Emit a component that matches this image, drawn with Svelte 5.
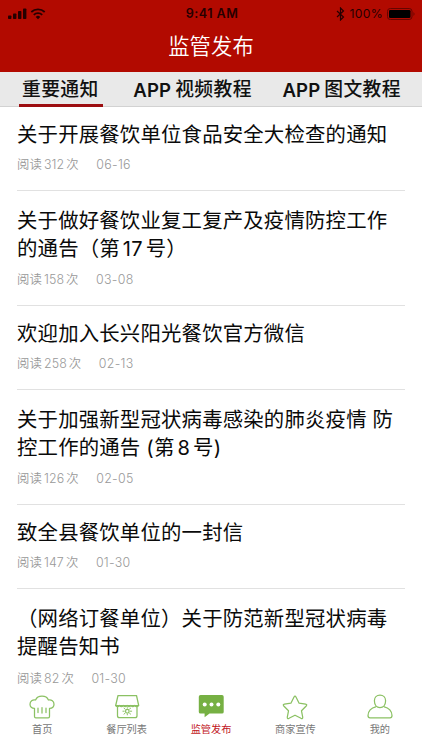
<script>
  const tabs = [
    { latin: '', text: '重要通知', active: true },
    { latin: 'APP', text: '视频教程' },
    { latin: 'APP', text: '图文教程' }
  ];
  const notices = [
    { lines: [['关于开展餐饮单位食品安全大检查的通知']], reads: '312', date: '06-16' },
    { lines: [['关于做好餐饮业复工复产及疫情防控工作'], ['的通告（第', '17', '号）']], reads: '158', date: '03-08' },
    { lines: [['欢迎加入长兴阳光餐饮官方微信']], reads: '258', date: '02-13' },
    { lines: [['关于加强新型冠状病毒感染的肺炎疫情 防'], ['控工作的通告 (第', '8', '号)']], reads: '126', date: '02-05' },
    { lines: [['致全县餐饮单位的一封信']], reads: '147', date: '01-30' },
    { lines: [['（网络订餐单位）关于防范新型冠状病毒'], ['提醒告知书']], reads: '82', date: '01-30' }
  ];
  const nav = [
    { icon: 'chef', text: '首页' },
    { icon: 'shop', text: '餐厅列表' },
    { icon: 'chat', text: '监管发布', active: true },
    { icon: 'star', text: '商家宣传' },
    { icon: 'user', text: '我的' }
  ];
</script>

<div class="app">
  <header>
    <div class="status">
      <div class="side">
        <svg width="40" height="14" viewBox="0 0 40 14">
          <g fill="#260000">
            <rect x="0" y="8.5" width="3.4" height="3.5" rx=".8" />
            <rect x="5" y="6.5" width="3.4" height="5.5" rx=".8" />
            <rect x="10" y="4" width="3.4" height="8" rx=".8" />
            <rect x="15" y="1.5" width="3.4" height="10.5" rx=".8" />
          </g>
          <g fill="none" stroke="#260000" stroke-width="1.8">
            <path d="M23.3 5a9.6 9.6 0 0 1 13.4 0" />
            <path d="M25.8 7.8a6 6 0 0 1 8.4 0" />
          </g>
          <path d="M27.7 9.9a3.4 3.4 0 0 1 4.6 0L30 12.2z" fill="#260000" />
        </svg>
      </div>
      <strong>9:41 AM</strong>
      <div class="side right">
        <svg width="9" height="14" viewBox="0 0 9 14" fill="none" stroke="#260000" stroke-width="1.2">
          <path d="M1 4l6.500 6L4.500 13V1l3 3L1 10" />
        </svg>
        <span>100%</span>
        <svg width="29" height="12" viewBox="0 0 29 12">
          <rect x=".5" y=".5" width="24.500" height="11" rx="2.800" fill="none" stroke="#650500" />
          <rect x="2" y="2" width="21.500" height="8" rx="1.300" fill="#000" />
          <path d="M26.500 4q2 2 0 4z" fill="#650500" />
        </svg>
      </div>
    </div>
    <h1>监管发布</h1>
  </header>

  <div class="tabs">
    {#each tabs as tab}
      <div class="tab" class:active={tab.active}>
        {#if tab.latin}<span class="latin">{tab.latin}</span>{/if}<span>{tab.text}</span>
      </div>
    {/each}
  </div>

  <main>
    {#each notices as notice}
      <article class:double={notice.lines.length > 1}>
        <h2>
          {#each notice.lines as line}
            <div class="line">{#each line as part, i}<span class:num={i === 1}>{part}</span>{/each}</div>
          {/each}
        </h2>
        <div class="meta"><span>阅读</span><span class="reads">{notice.reads}</span><span>次</span><span class="date">{notice.date}</span></div>
      </article>
    {/each}
  </main>

  <nav>
    {#each nav as item}
      <div class="item" class:active={item.active}>
        <svg width="28" height="26" viewBox="0 0 28 26" fill="none" stroke="#8bc163" stroke-width="1.25" stroke-linecap="round" stroke-linejoin="round">
          {#if item.icon === 'chef'}
            <path d="M6.500 22.500v-8.200C3.700 14.300 2 12.700 2 10.200 2 7.400 4.500 5.300 7.600 6 8.600 3.500 11 2.200 14 2.200s5.400 1.300 6.400 3.800C23.500 5.300 26 7.400 26 10.200c0 2.500-1.700 4.100-4.500 4.100v8.200q0 1.300-1.300 1.300H7.800q-1.300 0-1.300-1.300zM10 14v4.500M14 13.500v5.500M18 14v4.500" />
          {:else if item.icon === 'shop'}
            <path d="M5 1.500h18.500l2.200 10h-23zM4.500 11.500v10.200q0 2 2 2h15.500q2 0 2-2V11.500" />
            <path d="M2.700 11.500q1.900 2.200 3.800 0 1.900 2.200 3.800 0 1.900 2.200 3.800 0 1.900 2.200 3.800 0 1.900 2.200 3.800 0 1.900 2.200 3.800 0" />
            <circle cx="14.300" cy="17.200" r="1.800" />
            <path stroke-width="1" d="M14.300 14.200v-.5M14.300 20.200v.7M11.200 17.200h-1.300M17.400 17.200h1.300M12 15l-1-.8M16.600 15l1-.8M12 19.300l-1 .8M16.600 19.300l1 .8" />
          {:else if item.icon === 'chat'}
            <path stroke="none" fill="#76b043" d="M3.500 1h21.500q1.700 0 1.700 1.700v15.200q0 1.700-1.700 1.700H12.500L7.600 23.200v-3.600H3.500q-1.700 0-1.700-1.700V2.700Q1.800 1 3.500 1z" />
            <g fill="#fff" stroke="none"><circle cx="7.700" cy="10.500" r="2" /><circle cx="14.500" cy="10.500" r="2" /><circle cx="21.300" cy="10.500" r="2" /></g>
          {:else if item.icon === 'star'}
            <path d="M12.900 3.200q1.100-2 2.200 0l3 6 6.500.9q1.900.4.600 1.900l-4.700 4.800 1.200 6.300q.2 2-1.700 1.200L14 21.200l-6 3.100q-1.900.8-1.700-1.200l1.200-6.300L2.800 12q-1.300-1.500.6-1.900L9.900 9.200z" />
          {:else}
            <path d="M14 1c3.300 0 5.600 2.500 5.600 5.700 0 3.900-2.300 6.800-5.600 6.800S8.400 10.600 8.400 6.700C8.400 3.500 10.700 1 14 1zM9.700 12.800C5.200 13.600 2 17.500 2 21.500q0 2.300 2 2.300h20q2 0 2-2.300c0-4-3.200-7.900-7.700-8.700" />
          {/if}
        </svg>
        <span>{item.text}</span>
      </div>
    {/each}
  </nav>
</div>

<style>
  :global(body) { margin: 0; }
  .app {
    width: 422px;
    height: 750px;
    display: flex;
    flex-direction: column;
    overflow: hidden;
    background: #fff;
    color: #0a0a0a;
    font-family: Inter, "Noto Sans CJK SC", sans-serif;
    text-autospace: no-autospace;
    text-spacing-trim: space-all;
    white-space: nowrap;
  }
  header { height: 72px; flex: none; background: #b20a00; }
  .status {
    height: 27px;
    display: flex;
    align-items: center;
    box-sizing: border-box;
    padding: 0 6px 0 8px;
    color: #260000;
    font-size: 12.200px;
  }
  .side { flex: 1; display: flex; align-items: center; }
  .right { justify-content: flex-end; gap: 4px; letter-spacing: .3px; }
  strong { font-weight: 600; font-size: 12.600px; letter-spacing: .45px; }
  h1 {
    margin: 0;
    color: #fff;
    text-align: center;
    font-size: 21.300px;
    line-height: 38px;
    letter-spacing: .1px;
    font-weight: 350;
  }
  .tabs {
    height: 35px;
    flex: none;
    box-sizing: border-box;
    display: flex;
    justify-content: space-between;
    padding: 0 21px 0 19px;
    background: #e9e9e9;
    border-bottom: 1px solid #d2d2d2;
  }
  .tab {
    display: flex;
    gap: 4px;
    height: 35px;
    box-sizing: border-box;
    line-height: 36px;
    font-size: 18.800px;
    letter-spacing: .4px;
    font-weight: 500;
    color: #111;
  }
  .active.tab { border-bottom: 3px solid #9c0d10; padding: 0 4px 0 3px; }
  .latin { font-size: 18.600px; font-weight: 600; letter-spacing: .1px; }
  main { flex: 1; min-height: 0; padding: 0 17px; }
  article {
    height: 84px;
    box-sizing: border-box;
    display: flex;
    flex-direction: column;
    justify-content: space-between;
    padding: 14px 0 16px;
    border-bottom: 1px solid #e1e1e1;
  }
  article.double { height: 115px; padding-top: 16px; }
  article:last-child { border: 0; }
  h2 { margin: 0; font-size: 20.400px; line-height: 27.500px; font-weight: 400; letter-spacing: .18px; }
  .line { height: 27.500px; white-space: pre; }
  .num { margin: 0 3px; font-size: 20px; }
  .meta { display: flex; height: 18px; line-height: 18px; font-size: 12.400px; letter-spacing: .1px; color: #999; font-weight: 350; }
  .reads { margin: 0 2px; }
  .date { margin-left: 17.500px; letter-spacing: .3px; }
  nav { height: 58px; flex: none; display: flex; background: #fff; }
  .item { flex: 1; display: flex; flex-direction: column; align-items: center; padding-top: 2px; color: #777; font-size: 10.200px; line-height: 15px; }
  .item span { margin-top: 1.500px; }
  .item.active { color: #c1151d; }
</style>
